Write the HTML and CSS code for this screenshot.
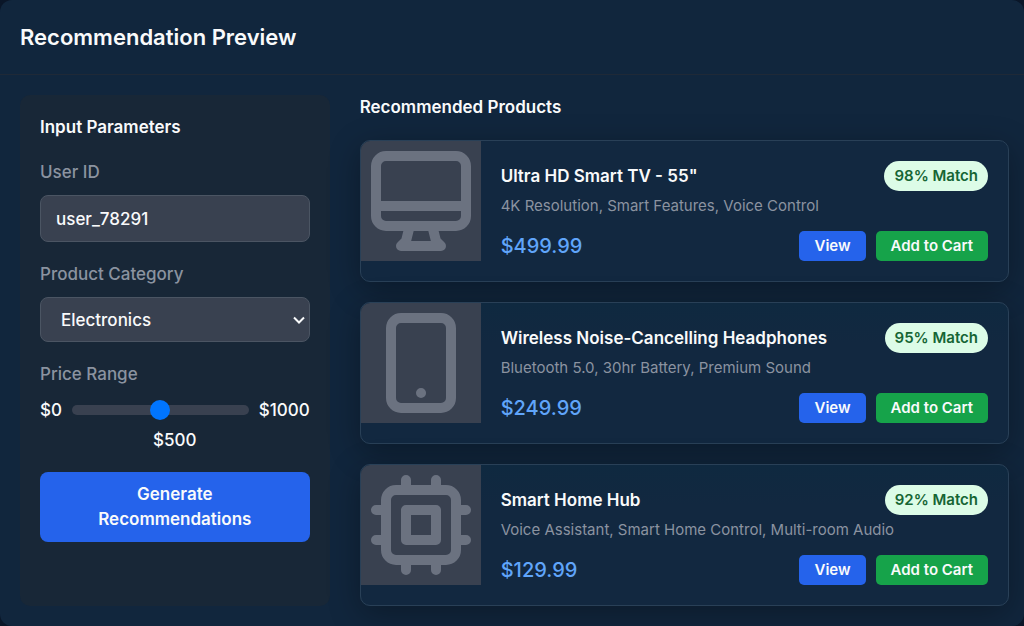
FILE: index.html
```html
<!DOCTYPE html>
<html lang="en">
<head>
<meta charset="utf-8">
<title>Recommendation Preview</title>
<link rel="stylesheet" href="styles.css">
</head>
<body>
<main class="panel">
  <header class="panel-header">
    <h1 class="panel-title">Recommendation Preview</h1>
  </header>
  <div class="panel-body">
    <form class="params">
      <h2 class="section-title">Input Parameters</h2>
      <div class="field">
        <label class="field-label" for="user-id">User ID</label>
        <input class="text-input" id="user-id" type="text" value="user_78291">
      </div>
      <div class="field">
        <label class="field-label" for="category">Product Category</label>
        <div class="select-wrap">
          <select class="select-input" id="category">
            <option>Electronics</option>
          </select>
          <svg class="chevron" viewBox="0 0 12 8" aria-hidden="true"><path d="M1 1.5l5 5 5-5"/></svg>
        </div>
      </div>
      <div class="field price-field">
        <label class="field-label" for="price">Price Range</label>
        <div class="range-row">
          <span>$0</span>
          <input class="range" id="price" type="range" min="0" max="1000" value="500">
          <span>$1000</span>
        </div>
        <output class="range-value" for="price">$500</output>
      </div>
      <button class="generate" type="button">Generate Recommendations</button>
    </form>
    <section class="results">
      <h2 class="section-title">Recommended Products</h2>
      <div class="product-list">
        <article class="product">
          <div class="thumb">
            <svg class="thumb-icon" viewBox="0 0 24 24" aria-hidden="true"><path d="M9.75 17L9 20l-1 1h8l-1-1-.75-3M3 13h18M5 17h14a2 2 0 002-2V5a2 2 0 00-2-2H5a2 2 0 00-2 2v10a2 2 0 002 2z"/></svg>
          </div>
          <div class="details">
            <div class="product-top">
              <h3 class="product-name">Ultra HD Smart TV - 55"</h3>
              <span class="match">98% Match</span>
            </div>
            <p class="product-desc">4K Resolution, Smart Features, Voice Control</p>
            <div class="product-bottom">
              <span class="price">$499.99</span>
              <div class="actions">
                <button class="btn btn-view" type="button">View</button>
                <button class="btn btn-cart" type="button">Add to Cart</button>
              </div>
            </div>
          </div>
        </article>
        <article class="product">
          <div class="thumb">
            <svg class="thumb-icon" viewBox="0 0 24 24" aria-hidden="true"><path d="M12 18h.01M8 21h8a2 2 0 002-2V5a2 2 0 00-2-2H8a2 2 0 00-2 2v14a2 2 0 002 2z"/></svg>
          </div>
          <div class="details">
            <div class="product-top">
              <h3 class="product-name">Wireless Noise-Cancelling Headphones</h3>
              <span class="match">95% Match</span>
            </div>
            <p class="product-desc">Bluetooth 5.0, 30hr Battery, Premium Sound</p>
            <div class="product-bottom">
              <span class="price">$249.99</span>
              <div class="actions">
                <button class="btn btn-view" type="button">View</button>
                <button class="btn btn-cart" type="button">Add to Cart</button>
              </div>
            </div>
          </div>
        </article>
        <article class="product">
          <div class="thumb">
            <svg class="thumb-icon" viewBox="0 0 24 24" aria-hidden="true"><path d="M9 3v2m6-2v2M9 19v2m6-2v2M5 9H3m2 6H3m18-6h-2m2 6h-2M7 19h10a2 2 0 002-2V7a2 2 0 00-2-2H7a2 2 0 00-2 2v10a2 2 0 002 2zM9 9h6v6H9V9z"/></svg>
          </div>
          <div class="details">
            <div class="product-top">
              <h3 class="product-name">Smart Home Hub</h3>
              <span class="match">92% Match</span>
            </div>
            <p class="product-desc">Voice Assistant, Smart Home Control, Multi-room Audio</p>
            <div class="product-bottom">
              <span class="price">$129.99</span>
              <div class="actions">
                <button class="btn btn-view" type="button">View</button>
                <button class="btn btn-cart" type="button">Add to Cart</button>
              </div>
            </div>
          </div>
        </article>
      </div>
    </section>
  </div>
</main>
</body>
</html>
```
FILE: styles.css
```css
* {
  box-sizing: border-box;
}

body {
  margin: 0;
  background: #0a1628;
  color: #f9fafb;
  font: 500 17px/30px Inter, sans-serif;
}

h1, h2, h3, p {
  margin: 0;
}

button, input, select {
  font: inherit;
  color: inherit;
}

.panel {
  overflow: hidden;
  border-radius: 12px;
  background: #11263d;
}

.panel-header {
  padding: 22px 20px;
  border-bottom: 1px solid #1f2937;
}

.panel-title {
  font-size: 22px;
  font-weight: 600;
  line-height: 30px;
}

.panel-body {
  display: grid;
  grid-template-columns: repeat(3, minmax(0, 1fr));
  gap: 30px;
  padding: 20px 15px 20px 20px;
}

.params {
  padding: 20px;
  border-radius: 10px;
  background: #182737;
}

.section-title {
  font-size: 17px;
  font-weight: 600;
  line-height: 25px;
}

.field {
  margin-top: 20px;
}

.field-label {
  display: block;
  margin-bottom: 10px;
  color: #8b93a0;
  line-height: 25px;
}

.text-input,
.select-input {
  display: block;
  width: 100%;
  border: 1px solid #4b5563;
  border-radius: 8px;
  background: #394150;
}

.text-input {
  height: 47px;
  padding: 0 15px;
}

.select-wrap {
  display: grid;
  align-items: center;
}

.select-input,
.chevron {
  grid-area: 1 / 1;
}

.select-input {
  height: 45px;
  padding: 0 20px;
  appearance: none;
}

.chevron {
  justify-self: end;
  width: 12px;
  height: 8px;
  margin-right: 5px;
  fill: none;
  stroke: #f9fafb;
  stroke-width: 2;
  pointer-events: none;
}

.range-row {
  display: flex;
  align-items: center;
  gap: 10px;
}

.range {
  flex: 1;
  min-width: 0;
  height: 10px;
  margin: 0;
  appearance: none;
  border-radius: 8px;
  background: #394150;
}

.range::-webkit-slider-thumb {
  width: 20px;
  height: 20px;
  appearance: none;
  border-radius: 50%;
  background: #0075ff;
}

.price-field .field-label {
  margin-bottom: 8px;
}

.range-value {
  display: block;
  text-align: center;
}

.generate {
  width: 100%;
  margin-top: 17px;
  padding: 10px 50px;
  border: 0;
  border-radius: 8px;
  background: #2563eb;
  font-weight: 600;
  line-height: 25px;
}

.results {
  grid-column: span 2;
}

.product-list {
  display: grid;
  gap: 20px;
  margin-top: 20px;
}

.product {
  display: flex;
  align-items: flex-start;
  overflow: hidden;
  border: 1px solid #294057;
  border-radius: 10px;
  background: #122840;
  box-shadow: 0 8px 32px rgba(0, 0, 0, 0.3);
}

.product + .product {
  background: linear-gradient(#0f2940, #122840 40px);
}

.thumb {
  flex: none;
  width: 120px;
  height: 120px;
  background: #394150;
}

.thumb-icon {
  display: block;
  fill: none;
  stroke: #6b7280;
  stroke-width: 2;
  stroke-linecap: round;
  stroke-linejoin: round;
}

.details {
  flex: 1;
  min-width: 0;
  padding: 20px;
}

.product-top,
.product-bottom {
  display: flex;
  align-items: center;
  justify-content: space-between;
}

.product-name {
  font-size: 17px;
  font-weight: 600;
  line-height: 30px;
}

.product-desc {
  color: #8b93a0;
  font-size: 15px;
  font-weight: 400;
  line-height: 30px;
}

.match {
  padding: 0 10px;
  border-radius: 15px;
  background: #dcfce7;
  color: #166534;
  font-size: 15px;
  font-weight: 600;
  white-space: nowrap;
}

.product-bottom {
  margin-top: 10px;
}

.price {
  color: #60a5fa;
  font-size: 20px;
}

.actions {
  display: flex;
  gap: 10px;
}

.btn {
  padding: 0 15px;
  border: 0;
  border-radius: 5px;
  font-size: 15px;
  font-weight: 600;
  line-height: 30px;
}

.btn-view {
  background: #2563eb;
}

.btn-cart {
  background: #16a34a;
}
```
